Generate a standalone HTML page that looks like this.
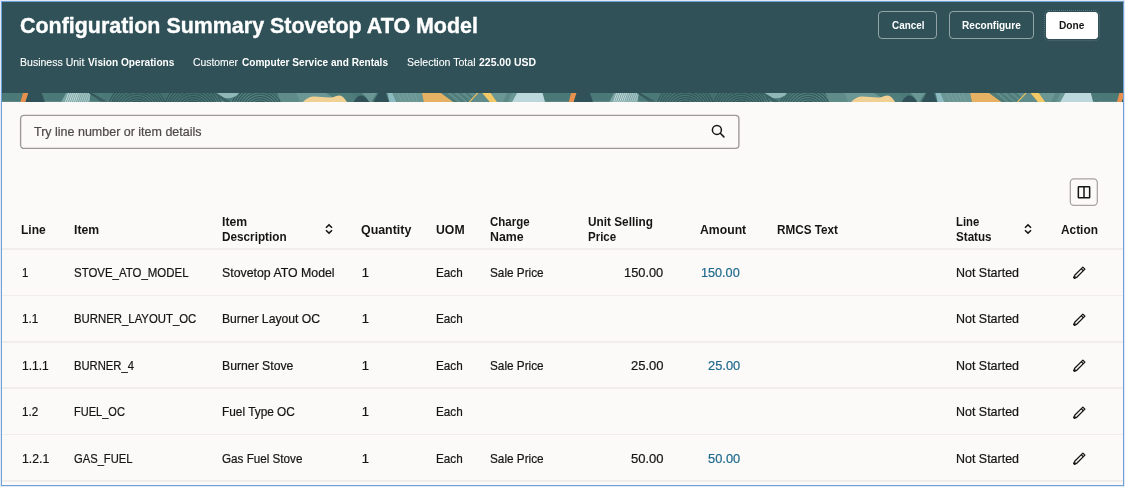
<!DOCTYPE html>
<html lang="en"><head><meta charset="utf-8"><title>Configuration Summary Stovetop ATO Model</title>
<style>
html,body{margin:0;padding:0}
body{width:1125px;height:487px;position:relative;overflow:hidden;background:#fcfaf9;font-family:"Liberation Sans",sans-serif;}
.hdr{position:absolute;left:0;top:0;width:1125px;height:94px;background:#2f5157}
.t{position:absolute;white-space:nowrap;line-height:0;transform-origin:0 0}
.btn{position:absolute;box-sizing:border-box;border:1px solid rgba(255,255,255,.48);border-radius:4px;top:11.1px;height:27.9px}
.hl{position:absolute;left:2px;width:1121px;height:1.6px;background:#f0edeb}
.pen{position:absolute;left:1069.7px;width:18px;height:18px}
.frame{position:absolute;left:0;top:0;width:1125px;height:487px;box-sizing:border-box;pointer-events:none}
</style></head><body>
<svg width="0" height="0" style="position:absolute"><defs>
<g id="pen" transform="rotate(45)" fill="none" stroke="#161513" stroke-width="1.3" stroke-linejoin="round"><path d="M-1.45 -6.9H1.45V4.3L.6 7H-.6L-1.45 4.3Z"/><path d="M-1.45 -4.7H1.45"/><path d="M-.7 5.9H.7" stroke-width="1.8"/></g>
</defs></svg>
<div class="hdr"></div>
<svg width="1125" height="8.9" viewBox="0 0 1125 8.9" preserveAspectRatio="none" style="position:absolute;left:0;top:93.3px"><defs><g id="tile"><rect x="-1" y="0" width="550.2" height="8.9" fill="#4b7977"/><polygon points="20.5,8.9 25.5,8.9 28.4,0.0 23.0,0.0" fill="#e8914f"/><polygon points="25.5,8.9 44.8,8.9 41.7,0.0 28.4,0.0" fill="#2f5157"/><polygon points="61.0,8.9 66.0,0.0 90.0,0.0 90.0,8.9" fill="#7ba6a5"/><path d="M68.6 0L65.4 8.9" stroke="#dfeeee" stroke-width="0.9" opacity=".8"/><path d="M70.6 0L67.4 8.9" stroke="#dfeeee" stroke-width="0.9" opacity=".8"/><path d="M72.6 0L69.4 8.9" stroke="#dfeeee" stroke-width="0.9" opacity=".8"/><path d="M74.6 0L71.4 8.9" stroke="#dfeeee" stroke-width="0.9" opacity=".8"/><path d="M76.6 0L73.4 8.9" stroke="#dfeeee" stroke-width="0.9" opacity=".8"/><path d="M78.6 0L75.4 8.9" stroke="#dfeeee" stroke-width="0.9" opacity=".8"/><path d="M80.6 0L77.4 8.9" stroke="#dfeeee" stroke-width="0.6" opacity=".8"/><path d="M82.6 0L79.4 8.9" stroke="#dfeeee" stroke-width="0.6" opacity=".8"/><path d="M84.6 0L81.4 8.9" stroke="#dfeeee" stroke-width="0.6" opacity=".8"/><path d="M86.6 0L83.4 8.9" stroke="#dfeeee" stroke-width="0.6" opacity=".8"/><path d="M88.6 0L85.4 8.9" stroke="#dfeeee" stroke-width="0.6" opacity=".8"/><path d="M90.6 0L87.4 8.9" stroke="#dfeeee" stroke-width="0.6" opacity=".8"/><path d="M89.0 0Q95.0 3.0 101.0 8.9" stroke="#2f5157" stroke-width=".7" fill="none" opacity=".85"/><path d="M89.5 0Q96.5 3.6 102.5 8.9" stroke="#2f5157" stroke-width=".7" fill="none" opacity=".85"/><path d="M90.0 0Q98.0 4.2 104.0 8.9" stroke="#2f5157" stroke-width=".7" fill="none" opacity=".85"/><path d="M90.5 0Q99.5 4.8 105.5 8.9" stroke="#2f5157" stroke-width=".7" fill="none" opacity=".85"/><path d="M91.0 0Q101.0 5.4 107.0 8.9" stroke="#2f5157" stroke-width=".7" fill="none" opacity=".85"/><rect x="112" y="0" width="103" height="8.9" fill="#467371"/><circle cx="137" cy="19" r="11.0" fill="none" stroke="#2a4a50" stroke-width=".9" opacity="0.9"/><circle cx="137" cy="19" r="13.3" fill="none" stroke="#2a4a50" stroke-width=".9" opacity="0.9"/><circle cx="137" cy="19" r="15.6" fill="none" stroke="#2a4a50" stroke-width=".9" opacity="0.9"/><circle cx="137" cy="19" r="17.9" fill="none" stroke="#2a4a50" stroke-width=".9" opacity="0.9"/><circle cx="137" cy="19" r="20.2" fill="none" stroke="#2a4a50" stroke-width=".9" opacity="0.9"/><circle cx="137" cy="19" r="22.5" fill="none" stroke="#2a4a50" stroke-width=".9" opacity="0.9"/><circle cx="137" cy="19" r="24.8" fill="none" stroke="#2a4a50" stroke-width=".9" opacity="0.9"/><circle cx="137" cy="19" r="27.1" fill="none" stroke="#2a4a50" stroke-width=".9" opacity="0.9"/><circle cx="137" cy="19" r="29.4" fill="none" stroke="#2a4a50" stroke-width=".9" opacity="0.9"/><circle cx="193" cy="19" r="11.0" fill="none" stroke="#2a4a50" stroke-width=".9" opacity="0.9"/><circle cx="193" cy="19" r="13.3" fill="none" stroke="#2a4a50" stroke-width=".9" opacity="0.9"/><circle cx="193" cy="19" r="15.6" fill="none" stroke="#2a4a50" stroke-width=".9" opacity="0.9"/><circle cx="193" cy="19" r="17.9" fill="none" stroke="#2a4a50" stroke-width=".9" opacity="0.9"/><circle cx="193" cy="19" r="20.2" fill="none" stroke="#2a4a50" stroke-width=".9" opacity="0.9"/><circle cx="193" cy="19" r="22.5" fill="none" stroke="#2a4a50" stroke-width=".9" opacity="0.9"/><circle cx="193" cy="19" r="24.8" fill="none" stroke="#2a4a50" stroke-width=".9" opacity="0.9"/><circle cx="193" cy="19" r="27.1" fill="none" stroke="#2a4a50" stroke-width=".9" opacity="0.9"/><circle cx="193" cy="19" r="29.4" fill="none" stroke="#2a4a50" stroke-width=".9" opacity="0.9"/><path d="M143.0 0L140.0 8.9" stroke="#2f5157" stroke-width=".5" opacity=".45"/><path d="M146.3 0L143.3 8.9" stroke="#2f5157" stroke-width=".5" opacity=".45"/><path d="M149.6 0L146.6 8.9" stroke="#2f5157" stroke-width=".5" opacity=".45"/><path d="M152.9 0L149.9 8.9" stroke="#2f5157" stroke-width=".5" opacity=".45"/><path d="M156.2 0L153.2 8.9" stroke="#2f5157" stroke-width=".5" opacity=".45"/><path d="M159.5 0L156.5 8.9" stroke="#2f5157" stroke-width=".5" opacity=".45"/><path d="M162.8 0L159.8 8.9" stroke="#2f5157" stroke-width=".5" opacity=".45"/><path d="M166.1 0L163.1 8.9" stroke="#2f5157" stroke-width=".5" opacity=".45"/><path d="M169.4 0L166.4 8.9" stroke="#2f5157" stroke-width=".5" opacity=".45"/><path d="M172.7 0L169.7 8.9" stroke="#2f5157" stroke-width=".5" opacity=".45"/><path d="M176.0 0L173.0 8.9" stroke="#2f5157" stroke-width=".5" opacity=".45"/><path d="M179.3 0L176.3 8.9" stroke="#2f5157" stroke-width=".5" opacity=".45"/><path d="M182.6 0L179.6 8.9" stroke="#2f5157" stroke-width=".5" opacity=".45"/><path d="M185.9 0L182.9 8.9" stroke="#2f5157" stroke-width=".5" opacity=".45"/><path d="M189.2 0L186.2 8.9" stroke="#2f5157" stroke-width=".5" opacity=".45"/><path d="M192.5 0L189.5 8.9" stroke="#2f5157" stroke-width=".5" opacity=".45"/><path d="M195.8 0L192.8 8.9" stroke="#2f5157" stroke-width=".5" opacity=".45"/><path d="M199.1 0L196.1 8.9" stroke="#2f5157" stroke-width=".5" opacity=".45"/><path d="M202.4 0L199.4 8.9" stroke="#2f5157" stroke-width=".5" opacity=".45"/><path d="M205.7 0L202.7 8.9" stroke="#2f5157" stroke-width=".5" opacity=".45"/><path d="M209.0 0L206.0 8.9" stroke="#2f5157" stroke-width=".5" opacity=".45"/><path d="M212.3 0L209.3 8.9" stroke="#2f5157" stroke-width=".5" opacity=".45"/><rect x="243" y="0" width="60" height="8.9" fill="#4f7d7b"/><circle cx="260" cy="19" r="11.0" fill="none" stroke="#2a4a50" stroke-width=".9" opacity="0.9"/><circle cx="260" cy="19" r="13.3" fill="none" stroke="#2a4a50" stroke-width=".9" opacity="0.9"/><circle cx="260" cy="19" r="15.6" fill="none" stroke="#2a4a50" stroke-width=".9" opacity="0.9"/><circle cx="260" cy="19" r="17.9" fill="none" stroke="#2a4a50" stroke-width=".9" opacity="0.9"/><circle cx="260" cy="19" r="20.2" fill="none" stroke="#2a4a50" stroke-width=".9" opacity="0.9"/><circle cx="260" cy="19" r="22.5" fill="none" stroke="#2a4a50" stroke-width=".9" opacity="0.9"/><circle cx="260" cy="19" r="24.8" fill="none" stroke="#2a4a50" stroke-width=".9" opacity="0.9"/><circle cx="260" cy="19" r="27.1" fill="none" stroke="#2a4a50" stroke-width=".9" opacity="0.9"/><circle cx="260" cy="19" r="29.4" fill="none" stroke="#2a4a50" stroke-width=".9" opacity="0.9"/><path d="M265.0 0L262.0 8.9" stroke="#2f5157" stroke-width=".5" opacity=".45"/><path d="M268.3 0L265.3 8.9" stroke="#2f5157" stroke-width=".5" opacity=".45"/><path d="M271.6 0L268.6 8.9" stroke="#2f5157" stroke-width=".5" opacity=".45"/><path d="M274.9 0L271.9 8.9" stroke="#2f5157" stroke-width=".5" opacity=".45"/><path d="M278.2 0L275.2 8.9" stroke="#2f5157" stroke-width=".5" opacity=".45"/><path d="M281.5 0L278.5 8.9" stroke="#2f5157" stroke-width=".5" opacity=".45"/><path d="M284.8 0L281.8 8.9" stroke="#2f5157" stroke-width=".5" opacity=".45"/><path d="M288.1 0L285.1 8.9" stroke="#2f5157" stroke-width=".5" opacity=".45"/><path d="M291.4 0L288.4 8.9" stroke="#2f5157" stroke-width=".5" opacity=".45"/><path d="M294.7 0L291.7 8.9" stroke="#2f5157" stroke-width=".5" opacity=".45"/><path d="M298.0 0L295.0 8.9" stroke="#2f5157" stroke-width=".5" opacity=".45"/><path d="M301.3 0L298.3 8.9" stroke="#2f5157" stroke-width=".5" opacity=".45"/><path d="M215 0H238.5A11.8 5.8 0 0 1 215 0Z" fill="#8fb7b8"/><polygon points="213.0,0.0 216.5,0.0 231.0,8.9 225.0,8.9" fill="#3b6263"/><polygon points="277.0,0.0 300.0,0.0 303.0,8.9 281.0,8.9" fill="#5f8b89"/><path d="M296 0H350L346 8.9H300Z" fill="#6a9694"/><path d="M326 0H352L356 8.9H340Z" fill="#4f7d7b"/><path d="M303 8.9C306 6 309 4 313 3.6C320 3.2 327 5.4 333 4.2C336 3.4 337 2.4 339.5 2.5C343 2.8 345 6 346.8 8.9Z" fill="#f1d093"/><path d="M353.5 8.9C356 5 358 2.4 361 2.4C364 2.4 366.5 5 369.5 8.9Z" fill="#2f5157"/><polygon points="362.0,0.0 377.0,0.0 371.0,8.9 369.5,8.9 365.5,3.5" fill="#6a9694"/><polygon points="373.3,8.9 388.9,8.9 385.8,0.0 378.3,0.0" fill="#2f5157"/><polygon points="387.3,0.0 392.6,0.0 396.4,8.9 389.5,8.9" fill="#8bbbc0"/><polygon points="392.6,0.0 421.9,0.0 423.7,8.9 396.4,8.9" fill="#6a9694"/><path d="M398.0 0L402.0 8.9" stroke="#8fb3b2" stroke-width=".6" opacity=".6"/><path d="M402.0 0L406.0 8.9" stroke="#8fb3b2" stroke-width=".6" opacity=".6"/><path d="M406.0 0L410.0 8.9" stroke="#8fb3b2" stroke-width=".6" opacity=".6"/><path d="M410.0 0L414.0 8.9" stroke="#8fb3b2" stroke-width=".6" opacity=".6"/><path d="M414.0 0L418.0 8.9" stroke="#8fb3b2" stroke-width=".6" opacity=".6"/><polygon points="421.9,0.0 441.2,0.0 453.6,8.9 423.7,8.9" fill="#e6b163"/><polygon points="441.2,0.0 478.0,0.0 469.0,8.9 453.6,8.9" fill="#5f8c8a"/><polygon points="444.0,0.0 447.0,0.0 458.0,8.9 454.0,8.9" fill="#4f7b79"/><polygon points="451.0,0.0 454.0,0.0 465.0,8.9 461.0,8.9" fill="#4f7b79"/><polygon points="458.0,0.0 461.0,0.0 472.0,8.9 468.0,8.9" fill="#4f7b79"/><polygon points="465.0,0.0 468.0,0.0 479.0,8.9 475.0,8.9" fill="#4f7b79"/><polygon points="441.2,0.0 444.0,0.0 456.0,8.9 453.6,8.9" fill="#4f7b79"/><polygon points="468.6,8.9 470.3,8.9 478.8,0.0 477.0,0.0" fill="#f0c25e"/><polygon points="478.8,0.0 482.2,0.0 489.7,8.9 470.3,8.9" fill="#5f8c8a"/><polygon points="482.2,0.0 490.9,0.0 497.2,8.9 489.7,8.9" fill="#f3c968"/><polygon points="490.9,0.0 517.0,0.0 512.0,8.9 497.2,8.9" fill="#6a9694"/><polygon points="507.0,0.0 512.0,0.0 508.0,8.9 503.0,8.9" fill="#5d8987"/><polygon points="517.0,0.0 542.6,0.0 545.0,8.9 512.0,8.9" fill="#bdd8dc"/></g></defs><use href="#tile"/><use href="#tile" x="548.2"/><use href="#tile" x="1096.4"/></svg>
<div class="btn" style="left:877.9px;width:59.5px"></div>
<div class="btn" style="left:948.8px;width:85px"></div>
<div class="btn" style="left:1046px;width:52px;top:11.7px;height:27px;border-radius:3px;background:#fff;border-color:#fff;outline:1px dotted rgba(255,255,255,.2);outline-offset:1px"></div>
<svg style="position:absolute;left:18px;top:112px" width="724" height="40" viewBox="0 0 724 40" fill="none"><rect x="2.6" y="3.3" width="718.3" height="33.1" rx="3.4" stroke="#9b9895" stroke-width="1.35"/></svg>
<svg style="position:absolute;left:710.2px;top:123.0px" width="16" height="16" viewBox="0 0 16 16" fill="none" stroke="#161513" stroke-width="1.5" stroke-linecap="round"><circle cx="6.9" cy="6.9" r="4.5"/><path d="M10.3 10.3l3.6 3.6"/></svg>
<svg style="position:absolute;left:1066.2px;top:174.1px" width="36" height="36" viewBox="0 0 36 36" fill="none"><rect x="4.3" y="4.8" width="27" height="26.6" rx="3.6" stroke="#a6a3a0" stroke-width="1.25"/></svg>
<svg style="position:absolute;left:1076.2px;top:184.2px" width="16" height="16" viewBox="0 0 16 16" fill="none" stroke="#161513" stroke-width="1.5"><rect x="2.35" y="2.75" width="11.3" height="11" rx=".6"/><path d="M8 2.75v11"/></svg>
<svg style="position:absolute;left:322.9px;top:222.0px" width="12" height="14" viewBox="0 0 12 14" fill="none" stroke="#161513" stroke-width="1.5" stroke-linecap="butt" stroke-linejoin="miter"><path d="M2.95 5.7L6 2.85l3.05 2.85M2.95 8.3L6 11.15l3.05-2.85"/></svg>
<svg style="position:absolute;left:1022.4px;top:221.9px" width="12" height="14" viewBox="0 0 12 14" fill="none" stroke="#161513" stroke-width="1.5" stroke-linecap="butt" stroke-linejoin="miter"><path d="M2.95 5.7L6 2.85l3.05 2.85M2.95 8.3L6 11.15l3.05-2.85"/></svg>
<div class="hl" style="top:248.10px"></div><div class="hl" style="top:294.54px"></div><div class="hl" style="top:340.98px"></div><div class="hl" style="top:387.42px"></div><div class="hl" style="top:433.86px"></div><div class="hl" style="top:480.30px"></div>
<svg class="pen" style="top:263.80px" viewBox="-9 -9 18 18"><use href="#pen"/></svg><svg class="pen" style="top:310.60px" viewBox="-9 -9 18 18"><use href="#pen"/></svg><svg class="pen" style="top:357.00px" viewBox="-9 -9 18 18"><use href="#pen"/></svg><svg class="pen" style="top:403.60px" viewBox="-9 -9 18 18"><use href="#pen"/></svg><svg class="pen" style="top:450.20px" viewBox="-9 -9 18 18"><use href="#pen"/></svg>
<div style="position:absolute;left:0;top:0;width:1125px;height:487px;will-change:transform"><span class="t" id="t0" style="left:20.40px;top:25.65px;font-size:21.5px;font-weight:700;color:#fff;transform:scaleX(0.9966);-webkit-text-stroke:0.35px #fff">Configuration Summary Stovetop ATO Model</span><span class="t" id="t1" style="left:19.60px;top:61.79px;font-size:11px;font-weight:400;color:#fff;transform:scaleX(0.9574);-webkit-text-stroke:0.10px #fff">Business Unit</span><span class="t" id="t2" style="left:88.00px;top:61.79px;font-size:11px;font-weight:700;color:#fff;transform:scaleX(0.9198)">Vision Operations</span><span class="t" id="t3" style="left:193.00px;top:61.79px;font-size:11px;font-weight:400;color:#fff;transform:scaleX(0.9436);-webkit-text-stroke:0.10px #fff">Customer</span><span class="t" id="t4" style="left:242.00px;top:61.79px;font-size:11px;font-weight:700;color:#fff;transform:scaleX(0.9150)">Computer Service and Rentals</span><span class="t" id="t5" style="left:406.50px;top:61.79px;font-size:11px;font-weight:400;color:#fff;transform:scaleX(0.9599);-webkit-text-stroke:0.10px #fff">Selection Total</span><span class="t" id="t6" style="left:479.00px;top:61.79px;font-size:11px;font-weight:700;color:#fff;transform:scaleX(0.9510)">225.00 USD</span><span class="t" id="t7" style="left:892.00px;top:24.99px;font-size:11px;font-weight:700;color:#fff;transform:scaleX(0.8981)">Cancel</span><span class="t" id="t8" style="left:961.90px;top:24.99px;font-size:11px;font-weight:700;color:#fff;transform:scaleX(0.9161)">Reconfigure</span><span class="t" id="t9" style="left:1059.40px;top:24.99px;font-size:11px;font-weight:700;color:#161513;transform:scaleX(0.9236)">Done</span><span class="t" id="t10" style="left:33.50px;top:131.50px;font-size:13px;font-weight:400;color:#4d4b49;transform:scaleX(0.9607);-webkit-text-stroke:0.22px #4d4b49">Try line number or item details</span><span class="t" id="t11" style="left:21.00px;top:229.60px;font-size:13px;font-weight:700;color:#161513;transform:scaleX(0.9239)">Line</span><span class="t" id="t12" style="left:74.40px;top:229.60px;font-size:13px;font-weight:700;color:#161513;transform:scaleX(0.9389)">Item</span><span class="t" id="t13" style="left:221.60px;top:222.10px;font-size:13px;font-weight:700;color:#161513;transform:scaleX(0.9389)">Item</span><span class="t" id="t14" style="left:221.60px;top:236.90px;font-size:13px;font-weight:700;color:#161513;transform:scaleX(0.9033)">Description</span><span class="t" id="t15" style="left:361.30px;top:229.60px;font-size:13px;font-weight:700;color:#161513;transform:scaleX(0.9538)">Quantity</span><span class="t" id="t16" style="left:436.20px;top:229.60px;font-size:13px;font-weight:700;color:#161513;transform:scaleX(0.9425)">UOM</span><span class="t" id="t17" style="left:490.40px;top:222.10px;font-size:13px;font-weight:700;color:#161513;transform:scaleX(0.8840)">Charge</span><span class="t" id="t18" style="left:490.40px;top:236.90px;font-size:13px;font-weight:700;color:#161513;transform:scaleX(0.9486)">Name</span><span class="t" id="t19" style="left:587.60px;top:222.10px;font-size:13px;font-weight:700;color:#161513;transform:scaleX(0.9077)">Unit Selling</span><span class="t" id="t20" style="left:587.60px;top:236.90px;font-size:13px;font-weight:700;color:#161513;transform:scaleX(0.8864)">Price</span><span class="t" id="t21" style="left:700.20px;top:229.60px;font-size:13px;font-weight:700;color:#161513;transform:scaleX(0.9408)">Amount</span><span class="t" id="t22" style="left:777.00px;top:229.60px;font-size:13px;font-weight:700;color:#161513;transform:scaleX(0.9016)">RMCS Text</span><span class="t" id="t23" style="left:955.80px;top:222.10px;font-size:13px;font-weight:700;color:#161513;transform:scaleX(0.8678)">Line</span><span class="t" id="t24" style="left:955.80px;top:236.90px;font-size:13px;font-weight:700;color:#161513;transform:scaleX(0.8959)">Status</span><span class="t" id="t25" style="left:1060.60px;top:229.60px;font-size:13px;font-weight:700;color:#161513;transform:scaleX(0.9122)">Action</span><span class="t" id="t26" style="left:21.50px;top:272.60px;font-size:13px;font-weight:400;color:#161513;transform:scaleX(0.8708);-webkit-text-stroke:0.22px #161513">1</span><span class="t" id="t27" style="left:74.20px;top:272.60px;font-size:13px;font-weight:400;color:#161513;transform:scaleX(0.8805);-webkit-text-stroke:0.22px #161513">STOVE_ATO_MODEL</span><span class="t" id="t28" style="left:221.60px;top:272.60px;font-size:13px;font-weight:400;color:#161513;transform:scaleX(0.9481);-webkit-text-stroke:0.22px #161513">Stovetop ATO Model</span><span class="t" id="t29" style="left:361.70px;top:272.60px;font-size:13px;font-weight:400;color:#161513;transform:scaleX(1.0000);-webkit-text-stroke:0.22px #161513">1</span><span class="t" id="t30" style="left:436.20px;top:272.60px;font-size:13px;font-weight:400;color:#161513;transform:scaleX(0.9008);-webkit-text-stroke:0.22px #161513">Each</span><span class="t" id="t31" style="left:490.40px;top:272.60px;font-size:13px;font-weight:400;color:#161513;transform:scaleX(0.9046);-webkit-text-stroke:0.22px #161513">Sale Price</span><span class="t" id="t32" style="left:624.40px;top:272.60px;font-size:13px;font-weight:400;color:#161513;transform:scaleX(0.9858);-webkit-text-stroke:0.22px #161513">150.00</span><span class="t" id="t33" style="left:701.30px;top:272.60px;font-size:13px;font-weight:400;color:#1f6a8c;transform:scaleX(0.9732);-webkit-text-stroke:0.22px #1f6a8c">150.00</span><span class="t" id="t34" style="left:955.80px;top:272.60px;font-size:13px;font-weight:400;color:#161513;transform:scaleX(0.9579);-webkit-text-stroke:0.22px #161513">Not Started</span><span class="t" id="t35" style="left:21.50px;top:319.40px;font-size:13px;font-weight:400;color:#161513;transform:scaleX(0.9016);-webkit-text-stroke:0.22px #161513">1.1</span><span class="t" id="t36" style="left:74.20px;top:319.40px;font-size:13px;font-weight:400;color:#161513;transform:scaleX(0.8742);-webkit-text-stroke:0.22px #161513">BURNER_LAYOUT_OC</span><span class="t" id="t37" style="left:221.60px;top:319.40px;font-size:13px;font-weight:400;color:#161513;transform:scaleX(0.9353);-webkit-text-stroke:0.22px #161513">Burner Layout OC</span><span class="t" id="t38" style="left:361.70px;top:319.40px;font-size:13px;font-weight:400;color:#161513;transform:scaleX(1.0000);-webkit-text-stroke:0.22px #161513">1</span><span class="t" id="t39" style="left:436.20px;top:319.40px;font-size:13px;font-weight:400;color:#161513;transform:scaleX(0.9008);-webkit-text-stroke:0.22px #161513">Each</span><span class="t" id="t40" style="left:955.80px;top:319.40px;font-size:13px;font-weight:400;color:#161513;transform:scaleX(0.9579);-webkit-text-stroke:0.22px #161513">Not Started</span><span class="t" id="t41" style="left:21.50px;top:365.80px;font-size:13px;font-weight:400;color:#161513;transform:scaleX(0.9232);-webkit-text-stroke:0.22px #161513">1.1.1</span><span class="t" id="t42" style="left:74.20px;top:365.80px;font-size:13px;font-weight:400;color:#161513;transform:scaleX(0.8651);-webkit-text-stroke:0.22px #161513">BURNER_4</span><span class="t" id="t43" style="left:221.60px;top:365.80px;font-size:13px;font-weight:400;color:#161513;transform:scaleX(0.9410);-webkit-text-stroke:0.22px #161513">Burner Stove</span><span class="t" id="t44" style="left:361.70px;top:365.80px;font-size:13px;font-weight:400;color:#161513;transform:scaleX(1.0000);-webkit-text-stroke:0.22px #161513">1</span><span class="t" id="t45" style="left:436.20px;top:365.80px;font-size:13px;font-weight:400;color:#161513;transform:scaleX(0.9008);-webkit-text-stroke:0.22px #161513">Each</span><span class="t" id="t46" style="left:490.40px;top:365.80px;font-size:13px;font-weight:400;color:#161513;transform:scaleX(0.9046);-webkit-text-stroke:0.22px #161513">Sale Price</span><span class="t" id="t47" style="left:631.00px;top:365.80px;font-size:13px;font-weight:400;color:#161513;transform:scaleX(1.0016);-webkit-text-stroke:0.22px #161513">25.00</span><span class="t" id="t48" style="left:707.80px;top:365.80px;font-size:13px;font-weight:400;color:#1f6a8c;transform:scaleX(0.9893);-webkit-text-stroke:0.22px #1f6a8c">25.00</span><span class="t" id="t49" style="left:955.80px;top:365.80px;font-size:13px;font-weight:400;color:#161513;transform:scaleX(0.9579);-webkit-text-stroke:0.22px #161513">Not Started</span><span class="t" id="t50" style="left:21.50px;top:412.40px;font-size:13px;font-weight:400;color:#161513;transform:scaleX(0.8961);-webkit-text-stroke:0.22px #161513">1.2</span><span class="t" id="t51" style="left:74.20px;top:412.40px;font-size:13px;font-weight:400;color:#161513;transform:scaleX(0.8488);-webkit-text-stroke:0.22px #161513">FUEL_OC</span><span class="t" id="t52" style="left:221.60px;top:412.40px;font-size:13px;font-weight:400;color:#161513;transform:scaleX(0.9116);-webkit-text-stroke:0.22px #161513">Fuel Type OC</span><span class="t" id="t53" style="left:361.70px;top:412.40px;font-size:13px;font-weight:400;color:#161513;transform:scaleX(1.0000);-webkit-text-stroke:0.22px #161513">1</span><span class="t" id="t54" style="left:436.20px;top:412.40px;font-size:13px;font-weight:400;color:#161513;transform:scaleX(0.9008);-webkit-text-stroke:0.22px #161513">Each</span><span class="t" id="t55" style="left:955.80px;top:412.40px;font-size:13px;font-weight:400;color:#161513;transform:scaleX(0.9579);-webkit-text-stroke:0.22px #161513">Not Started</span><span class="t" id="t56" style="left:21.50px;top:459.00px;font-size:13px;font-weight:400;color:#161513;transform:scaleX(0.9405);-webkit-text-stroke:0.22px #161513">1.2.1</span><span class="t" id="t57" style="left:74.20px;top:459.00px;font-size:13px;font-weight:400;color:#161513;transform:scaleX(0.8613);-webkit-text-stroke:0.22px #161513">GAS_FUEL</span><span class="t" id="t58" style="left:221.60px;top:459.00px;font-size:13px;font-weight:400;color:#161513;transform:scaleX(0.8972);-webkit-text-stroke:0.22px #161513">Gas Fuel Stove</span><span class="t" id="t59" style="left:361.70px;top:459.00px;font-size:13px;font-weight:400;color:#161513;transform:scaleX(1.0000);-webkit-text-stroke:0.22px #161513">1</span><span class="t" id="t60" style="left:436.20px;top:459.00px;font-size:13px;font-weight:400;color:#161513;transform:scaleX(0.9008);-webkit-text-stroke:0.22px #161513">Each</span><span class="t" id="t61" style="left:490.40px;top:459.00px;font-size:13px;font-weight:400;color:#161513;transform:scaleX(0.9046);-webkit-text-stroke:0.22px #161513">Sale Price</span><span class="t" id="t62" style="left:631.00px;top:459.00px;font-size:13px;font-weight:400;color:#161513;transform:scaleX(1.0016);-webkit-text-stroke:0.22px #161513">50.00</span><span class="t" id="t63" style="left:707.80px;top:459.00px;font-size:13px;font-weight:400;color:#1f6a8c;transform:scaleX(0.9893);-webkit-text-stroke:0.22px #1f6a8c">50.00</span><span class="t" id="t64" style="left:955.80px;top:459.00px;font-size:13px;font-weight:400;color:#161513;transform:scaleX(0.9579);-webkit-text-stroke:0.22px #161513">Not Started</span></div>
<div class="frame"><div style="position:absolute;left:0;top:0;right:0;height:1px;background:#dfe9f5"></div><div style="position:absolute;left:0;top:1px;right:0;height:1px;background:#6fa0d8"></div>
<div style="position:absolute;left:0;top:0;bottom:0;width:1px;background:#dfe9f5"></div><div style="position:absolute;left:1px;top:1px;bottom:1px;width:1px;background:#6fa0d8"></div>
<div style="position:absolute;right:0;top:0;bottom:0;width:1px;background:#dfe9f5"></div><div style="position:absolute;right:1px;top:1px;bottom:1px;width:1.5px;background:#6fa0d8"></div>
<div style="position:absolute;left:0;bottom:0;right:0;height:1px;background:#dfe9f5"></div><div style="position:absolute;left:1px;bottom:1px;right:1px;height:1.5px;background:#6fa0d8"></div></div>
</body></html>
